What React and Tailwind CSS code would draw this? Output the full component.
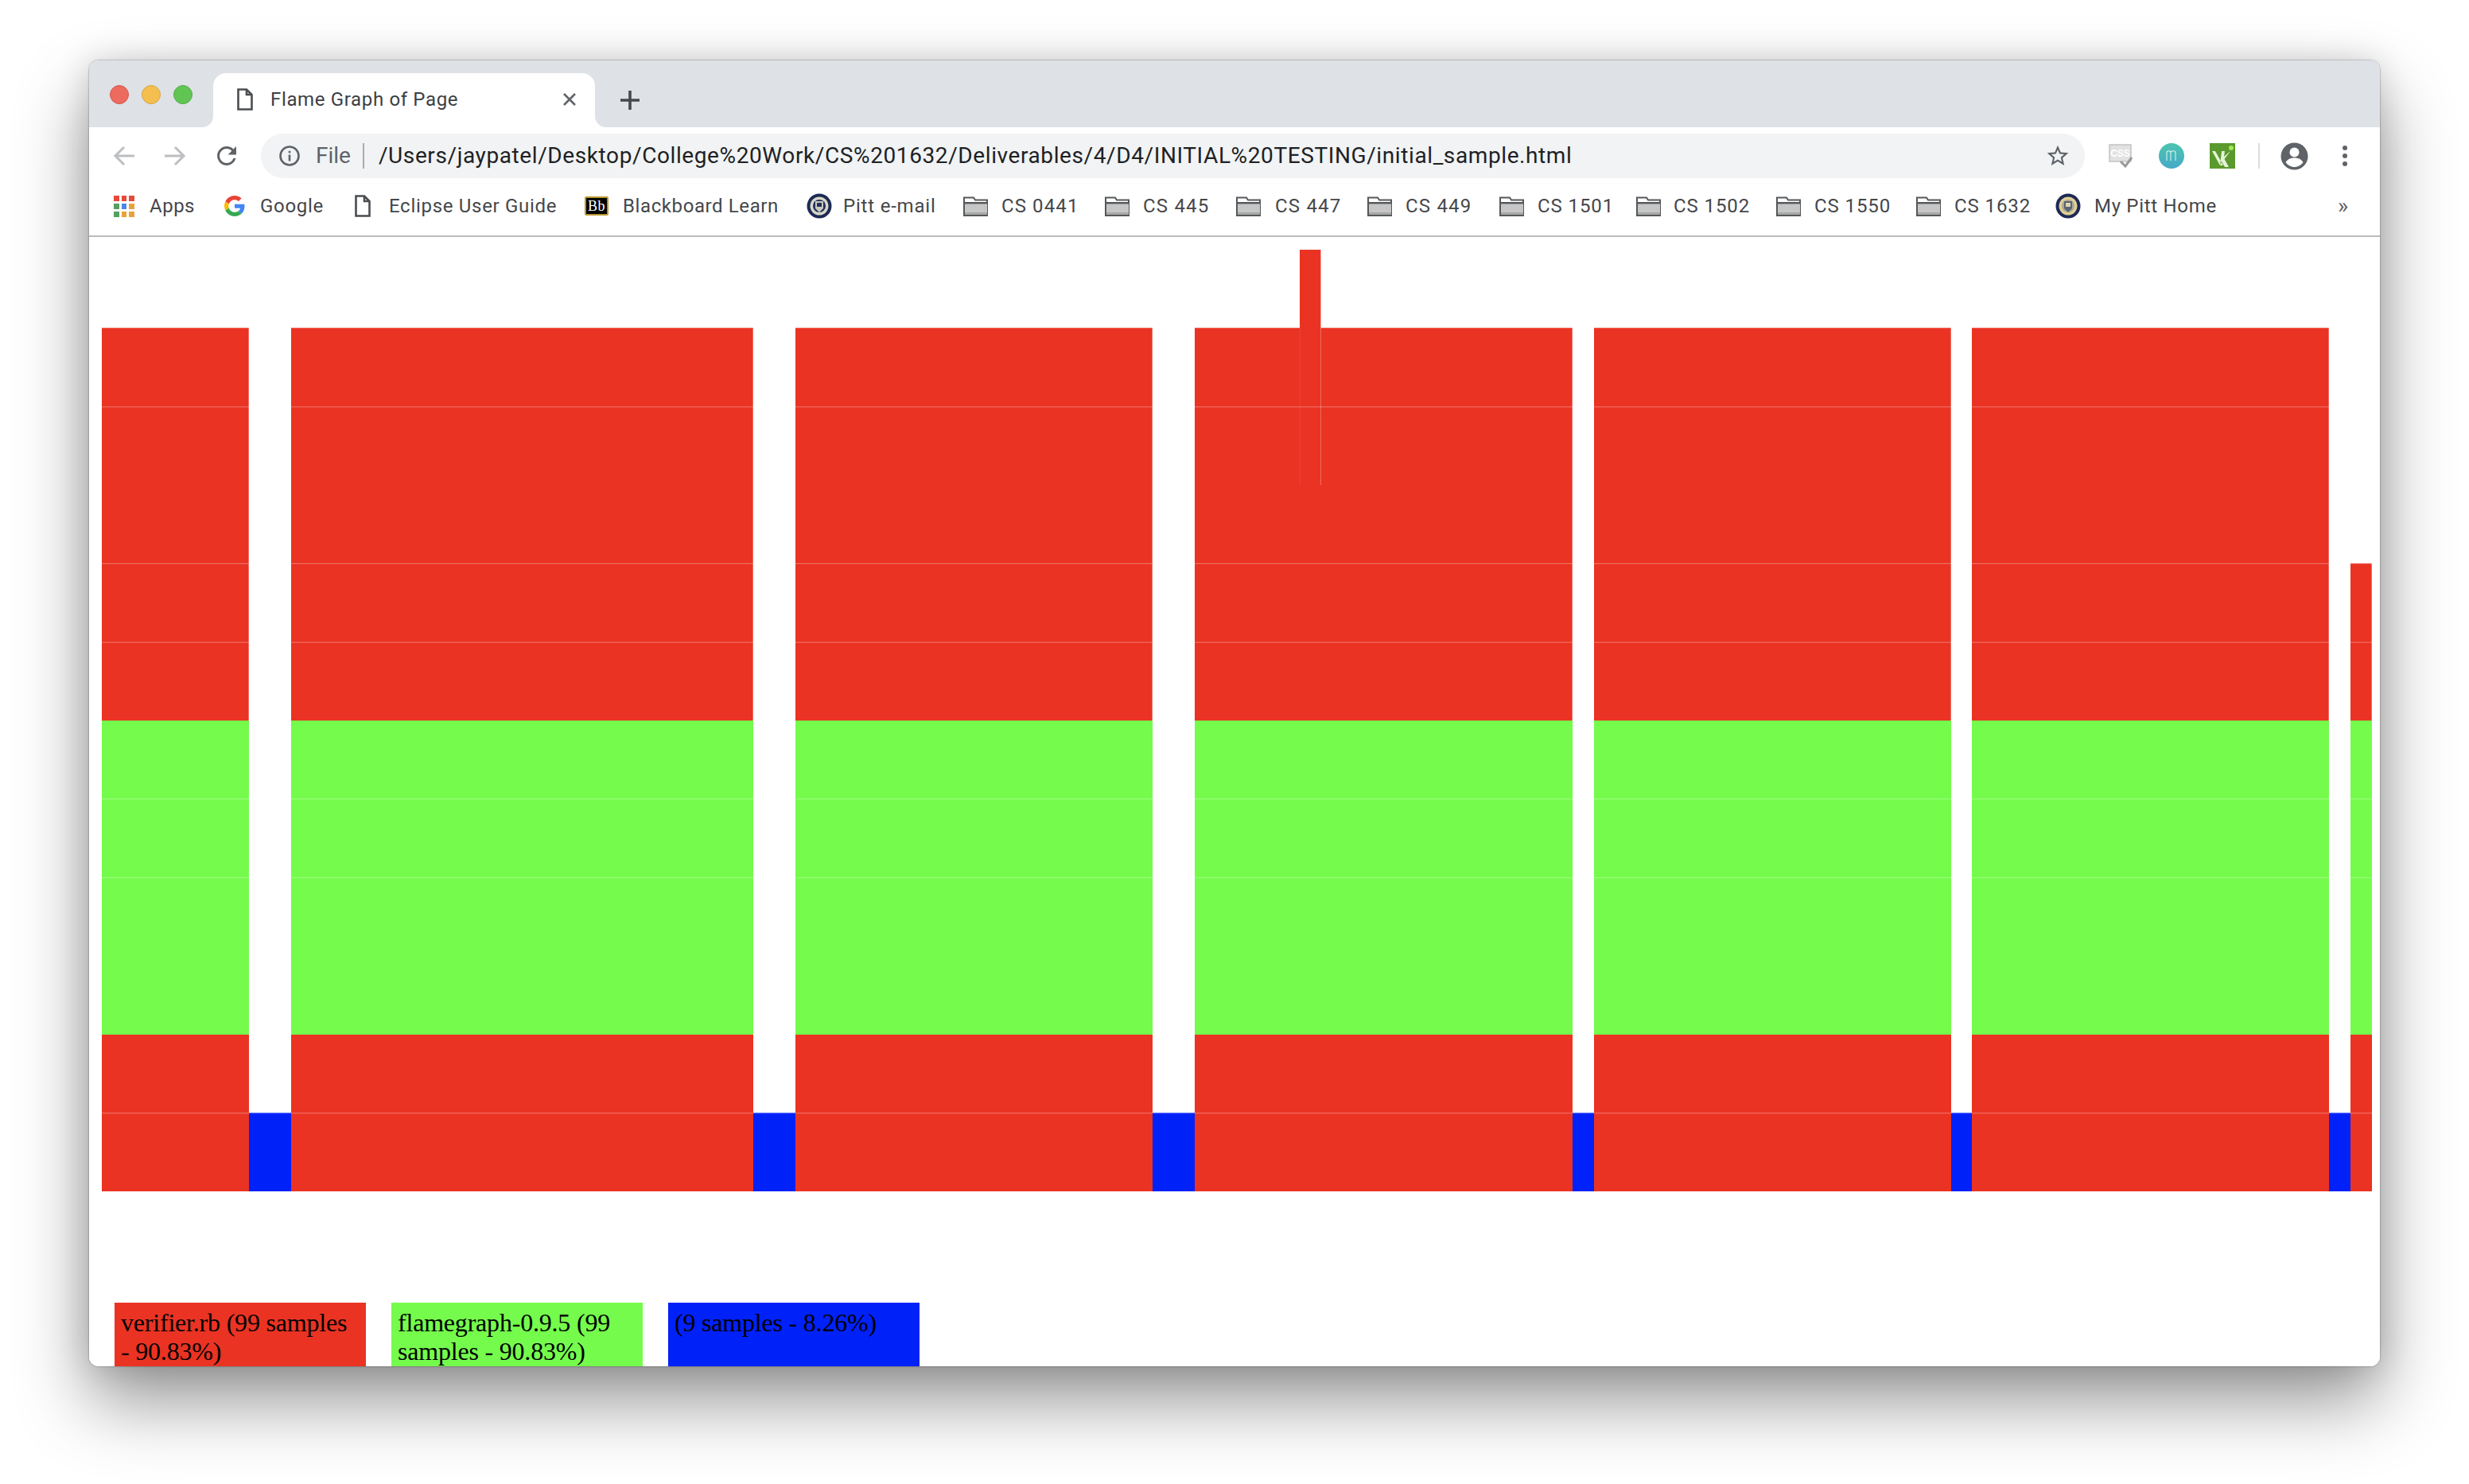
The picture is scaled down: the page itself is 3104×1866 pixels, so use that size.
const RED = "#ea3323";
const GREEN = "#75fb4c";
const BLUE = "#0121f9";

const columns = [
  [128, 313],
  [366, 947],
  [1000, 1449],
  [1502, 1977],
  [2004, 2453],
  [2479, 2928],
  [2955, 2982],
];
const blues = [
  [313, 366],
  [947, 1000],
  [1449, 1502],
  [1977, 2004],
  [2453, 2479],
  [2928, 2955],
];

function Chart() {
  const line = "rgba(255,255,255,0.28)";
  return (
    <svg viewBox="128 314 2854 1184" className="block ml-4 mt-4 w-[2854px] h-[1184px] shrink-0">
      {columns.map(([a, b], i) => {
        const top = i === 6 ? 708 : 412;
        const w = b - a;
        return (
          <g key={i}>
            <rect x={a} y={top} width={w} height={906 - top} fill={RED} />
            <rect x={a} y={906} width={w} height={395} fill={GREEN} />
            <rect x={a} y={1301} width={w} height={197} fill={RED} />
            <rect x={a} y={1399} width={w} height={1.2} fill={line} />
            <rect x={b - 1} y={top} width={1} height={906 - top} fill="rgba(255,255,255,0.3)" />
            <rect x={a} y={top} width={w} height={1} fill={line} />
            {i !== 6 && <rect x={a} y={511} width={w} height={1.2} fill={line} />}
            <rect x={a} y={708} width={w} height={1.2} fill={line} />
            <rect x={a} y={807} width={w} height={1.2} fill={line} />
            <rect x={a} y={1004} width={w} height={1.2} fill={line} />
            <rect x={a} y={1103} width={w} height={1.2} fill={line} />
          </g>
        );
      })}
      {blues.map(([a, b], i) => (
        <g key={i}>
          <rect x={a} y={1399} width={b - a} height={99} fill={BLUE} />
          <rect x={a} y={1399} width={b - a} height={1.2} fill="rgba(255,255,255,0.35)" />
        </g>
      ))}
      <rect x={1634} y={314} width={26} height={99} fill={RED} />
      <rect x={1660} y={314} width={1} height={99} fill="rgba(234,51,35,0.45)" />
      <rect x={1634} y={412} width={1} height={198} fill="rgba(255,255,255,0.07)" />
      <rect x={1660} y={412} width={1} height={198} fill="rgba(255,255,255,0.28)" />
    </svg>
  );
}

function DocIcon() {
  return (
    <svg width="20" height="28" viewBox="0 0 20 28" className="shrink-0">
      <path d="M1.5 1.5H12L18.5 8V26.5H1.5Z M12 1.5V8H18.5" fill="none" stroke="#4a4d51" strokeWidth="2.6" />
    </svg>
  );
}

function Folder() {
  return (
    <svg width="31" height="25" viewBox="0 0 31 25" className="shrink-0">
      <path d="M1 1.5H13L15 4.5H30V24H1Z" fill="#fff" stroke="#55585b" strokeWidth="2" />
      <rect x="2" y="9" width="28" height="14" fill="#c6c6c6" />
      <rect x="1" y="7" width="29" height="2.4" fill="#55585b" />
      <rect x="2" y="20" width="28" height="3" fill="#a8a8a8" />
    </svg>
  );
}

function AppsIcon() {
  const c = ["#e5493a", "#e5493a", "#e5493a", "#55a05e", "#4a86e8", "#e8a23a", "#55a05e", "#e8a23a", "#e8a23a"];
  return (
    <div className="grid grid-cols-3 gap-[3px] w-[26px] shrink-0">
      {c.map((x, i) => (
        <div key={i} className="h-[7px]" style={{ background: x }} />
      ))}
    </div>
  );
}

function GoogleIcon() {
  return (
    <svg width="26" height="26" viewBox="0 0 48 48" className="shrink-0">
      <path fill="#EA4335" d="M24 9.5c3.5 0 6.7 1.2 9.2 3.6l6.9-6.9C35.9 2.4 30.5 0 24 0 14.6 0 6.5 5.4 2.6 13.2l8 6.2C12.5 13.7 17.8 9.5 24 9.5z" />
      <path fill="#4285F4" d="M47 24.5c0-1.6-.1-3.1-.4-4.5H24v9h12.9c-.6 3-2.2 5.5-4.7 7.2l7.7 6c4.5-4.2 7.1-10.3 7.1-17.7z" />
      <path fill="#FBBC05" d="M10.5 28.6c-.5-1.4-.8-3-.8-4.6s.3-3.2.8-4.6l-8-6.2C.9 16.5 0 20.1 0 24s.9 7.5 2.6 10.8l7.9-6.2z" />
      <path fill="#34A853" d="M24 48c6.5 0 11.9-2.1 15.9-5.8l-7.7-6c-2.1 1.4-4.9 2.3-8.2 2.3-6.200 0-11.500-4.200-13.400-9.900l-8 6.200C6.500 42.600 14.600 48 24 48z" />
    </svg>
  );
}

function BbIcon() {
  return (
    <div className="w-[30px] h-[24px] shrink-0 bg-black border-2 border-[#b9972f] rounded-[2px] flex items-center justify-center text-white text-[18px] leading-none font-['Liberation_Serif',serif]">
      Bb
    </div>
  );
}

function SealIcon({ home }) {
  return (
    <svg width="32" height="32" viewBox="0 0 32 32" className="shrink-0">
      <circle cx="16" cy="16" r="15.500" fill="#1c2a55" />
      <circle cx="16" cy="16" r="11.500" fill={home ? "#e0cf94" : "#d8d6c8"} />
      <circle cx="16" cy="16" r="8" fill={home ? "#a8a89a" : "#20305e"} />
      <path d="M11 10h10v9l-5 5-5-5z" fill={home ? "#5b6470" : "#c9c8bd"} />
      <rect x="13" y="12" width="6" height="5" fill={home ? "#d9d5b5" : "#20305e"} />
    </svg>
  );
}

const bookmarks = [
  { label: "Apps", icon: <AppsIcon />, cls: "w-[139px] gap-[19px] tracking-[0.5px]" },
  { label: "Google", icon: <GoogleIcon />, cls: "w-[164px] gap-[19px] tracking-[0.7px]" },
  { label: "Eclipse User Guide", icon: <DocIcon />, cls: "w-[289px] gap-[23px] tracking-[0.7px]" },
  { label: "Blackboard Learn", icon: <BbIcon />, cls: "w-[279px] gap-[18px] tracking-[0.6px]" },
  { label: "Pitt e-mail", icon: <SealIcon />, cls: "w-[197px] gap-[14px] tracking-[0.8px]" },
  { label: "CS 0441", icon: <Folder />, cls: "w-[178px] gap-[17px] tracking-[1.1px]" },
  { label: "CS 445", icon: <Folder />, cls: "w-[165px] gap-[17px] tracking-[1.2px]" },
  { label: "CS 447", icon: <Folder />, cls: "w-[165px] gap-[18px] tracking-[1.2px]" },
  { label: "CS 449", icon: <Folder />, cls: "w-[166px] gap-[17px] tracking-[1.2px]" },
  { label: "CS 1501", icon: <Folder />, cls: "w-[172px] gap-[17px] tracking-[0.9px]" },
  { label: "CS 1502", icon: <Folder />, cls: "w-[176px] gap-[16px] tracking-[0.9px]" },
  { label: "CS 1550", icon: <Folder />, cls: "w-[176px] gap-[17px] tracking-[0.9px]" },
  { label: "CS 1632", icon: <Folder />, cls: "w-[175px] gap-[17px] tracking-[0.9px]" },
  { label: "My Pitt Home", icon: <SealIcon home />, cls: "gap-[17px] tracking-[0.7px]" },
];

function Legend({ color, children }) {
  return (
    <div className="w-[316px] h-[80px] overflow-hidden pl-2 pr-4 pt-[7px] text-[32px] leading-[36px] text-black font-['Liberation_Serif',serif] tracking-[-0.2px]" style={{ background: color }}>
      {children}
    </div>
  );
}

export default function App() {
  return (
    <div className="w-[3104px] h-[1866px] bg-white pl-[112px] pt-[76px] overflow-hidden font-['Roboto',sans-serif]">
      <div className="w-[2880px] h-[1642px] rounded-[12px] bg-white flex flex-col overflow-hidden shadow-[0_44px_90px_rgba(0,0,0,0.42),0_0_40px_rgba(0,0,0,0.14),0_0_2px_rgba(0,0,0,0.55)]">
        <div className="flex h-[84px] bg-white shrink-0">
          <div className="w-[156px] h-full bg-[#dee1e6] rounded-br-[14px] flex items-center gap-4 pl-[26px] pt-[2px]">
            <div className="w-6 h-6 rounded-full bg-[#ed6a5e] border border-[#d6584c]" />
            <div className="w-6 h-6 rounded-full bg-[#f5bf4f] border border-[#d9a442]" />
            <div className="w-6 h-6 rounded-full bg-[#61c554] border border-[#52ad46]" />
          </div>
          <div className="w-[480px] h-full bg-[#dee1e6] pt-4">
            <div className="h-[68px] bg-white rounded-t-[16px] flex items-center pl-[30px] pb-[2px]">
              <DocIcon />
              <span className="ml-[22px] text-[24px] leading-none text-[#3c4043] tracking-[0.65px] whitespace-nowrap">Flame Graph of Page</span>
              <svg width="18" height="18" viewBox="0 0 18 18" className="ml-auto mr-[23px]">
                <path d="M2 2L16 16M16 2L2 16" stroke="#5f6368" strokeWidth="2.6" />
              </svg>
            </div>
          </div>
          <div className="flex-1 h-full bg-[#dee1e6] rounded-bl-[14px] flex items-center pl-[32px] pt-[16px]">
            <svg width="24" height="24" viewBox="0 0 24 24">
              <path d="M12 0V24M0 12H24" stroke="#45484c" strokeWidth="3.600" />
            </svg>
          </div>
        </div>

        <div className="flex items-center h-[72px] pl-[30px] shrink-0">
          <svg width="28" height="26" viewBox="0 0 28 26" className="shrink-0">
            <path d="M27 13H3M14 2L3 13L14 24" fill="none" stroke="#bcbec1" strokeWidth="3" />
          </svg>
          <svg width="28" height="26" viewBox="0 0 28 26" className="shrink-0 ml-9">
            <path d="M1 13H25M14 2L25 13L14 24" fill="none" stroke="#bcbec1" strokeWidth="3" />
          </svg>
          <svg width="36" height="36" viewBox="0 0 24 24" className="shrink-0 ml-[33px]">
            <path fill="#5f6368" d="M17.65 6.350A7.960 7.960 0 0 0 12 4a8 8 0 1 0 7.730 10h-2.080A6 6 0 1 1 12 6c1.660 0 3.140.690 4.220 1.780L13 11h7V4l-2.350 2.350z" />
          </svg>
          <div className="ml-[25px] w-[2293px] h-14 rounded-full bg-[#f1f3f4] flex items-center pl-[23px] pr-[18px] shrink-0">
            <svg width="26" height="26" viewBox="0 0 26 26" className="shrink-0">
              <circle cx="13" cy="13" r="11.500" fill="none" stroke="#5f6368" strokeWidth="2.600" />
              <rect x="11.700" y="11.500" width="2.600" height="8" fill="#5f6368" />
              <rect x="11.700" y="6.800" width="2.600" height="2.600" fill="#5f6368" />
            </svg>
            <span className="ml-5 text-[28px] leading-none text-[#5f6368]">File</span>
            <div className="ml-[15px] w-[2px] h-8 bg-[#a9abae]" />
            <span className="ml-[18px] text-[28px] leading-none text-[#202124] tracking-[0.6px] whitespace-nowrap">/Users/jaypatel/Desktop/College%20Work/CS%201632/Deliverables/4/D4/INITIAL%20TESTING/initial_sample.html</span>
            <svg width="32" height="32" viewBox="0 0 24 24" className="ml-auto shrink-0">
              <path fill="#5f6368" d="M22 9.240l-7.190-.620L12 2 9.190 8.630 2 9.240l5.460 4.730L5.820 21 12 17.270 18.180 21l-1.630-7.030L22 9.240zM12 15.400l-3.760 2.270 1-4.280-3.320-2.880 4.380-.380L12 6.100l1.710 4.040 4.380.380-3.320 2.880 1 4.280L12 15.400z" />
            </svg>
          </div>
          <svg width="30" height="30" viewBox="0 0 30 30" className="ml-[30px] shrink-0">
            <rect x="1" y="1" width="27" height="21" fill="#e2e2e2" stroke="#c4c4c4" strokeWidth="1.500" />
            <text x="14.500" y="16" textAnchor="middle" fontSize="12" fontWeight="700" fill="#fff" fontFamily="Liberation Sans">CSS</text>
            <path d="M15 22L21 28L29 17" fill="none" stroke="#9a9a9a" strokeWidth="3" />
          </svg>
          <svg width="32" height="32" viewBox="0 0 32 32" className="ml-[33px] shrink-0">
            <defs>
              <linearGradient id="mint" x1="0" y1="0" x2="0" y2="1">
                <stop offset="0" stopColor="#4cc4b0" />
                <stop offset="1" stopColor="#45a9c8" />
              </linearGradient>
            </defs>
            <circle cx="16" cy="16" r="16" fill="url(#mint)" />
            <path d="M10 22V12c0-3 5-3 5 0V22M15 12c0-3 6-3 6 0V22" fill="none" stroke="#d6f2ee" strokeWidth="1.100" />
          </svg>
          <svg width="32" height="32" viewBox="0 0 32 32" className="ml-[32px] shrink-0">
            <rect width="32" height="32" fill="#5a9a2c" />
            <path d="M3 10L13 28H17L7 10ZM13 28L15 10H19L18 17L26 10L18.500 20L24 30H19L15 23Z" fill="#e6f2da" />
            <circle cx="27" cy="6" r="3" fill="#a5e65a" />
          </svg>
          <div className="ml-[29px] w-[2px] h-8 bg-[#dadce0] shrink-0" />
          <svg width="35" height="35" viewBox="0 0 35 35" className="ml-[26px] shrink-0">
            <circle cx="17.500" cy="17.500" r="17" fill="#5f6368" />
            <circle cx="17.500" cy="12.500" r="6" fill="#fff" />
            <path d="M6.500 25c3-4.500 7-5.500 11-5.500s8 1 11 5.500c-2.500 3.500-6.500 6-11 6s-8.500-2.500-11-6z" fill="#fff" />
          </svg>
          <div className="ml-[43px] flex flex-col gap-1 shrink-0">
            <div className="w-[6px] h-[6px] rounded-full bg-[#5f6368]" />
            <div className="w-[6px] h-[6px] rounded-full bg-[#5f6368]" />
            <div className="w-[6px] h-[6px] rounded-full bg-[#5f6368]" />
          </div>
        </div>

        <div className="flex items-center h-[66px] pb-[10px] pl-[31px] border-b-2 border-[#bcbcbc] shrink-0 box-border">
          {bookmarks.map((b) => (
            <div key={b.label} className={`flex items-center shrink-0 text-[24px] leading-none text-[#45474a] whitespace-nowrap ${b.cls}`}>
              {b.icon}
              <span>{b.label}</span>
            </div>
          ))}
          <span className="ml-auto mr-[40px] text-[28px] leading-none text-[#5f6368]">»</span>
        </div>

        <div className="flex-1 min-h-0 bg-white flex flex-col overflow-hidden">
          <Chart />
          <div className="flex gap-8 ml-8 mt-[140px] shrink-0">
            <Legend color={RED}>verifier.rb (99 samples - 90.83%)</Legend>
            <Legend color={GREEN}>flamegraph-0.9.5 (99 samples - 90.83%)</Legend>
            <Legend color={BLUE}>(9 samples - 8.26%)</Legend>
          </div>
        </div>
      </div>
    </div>
  );
}
